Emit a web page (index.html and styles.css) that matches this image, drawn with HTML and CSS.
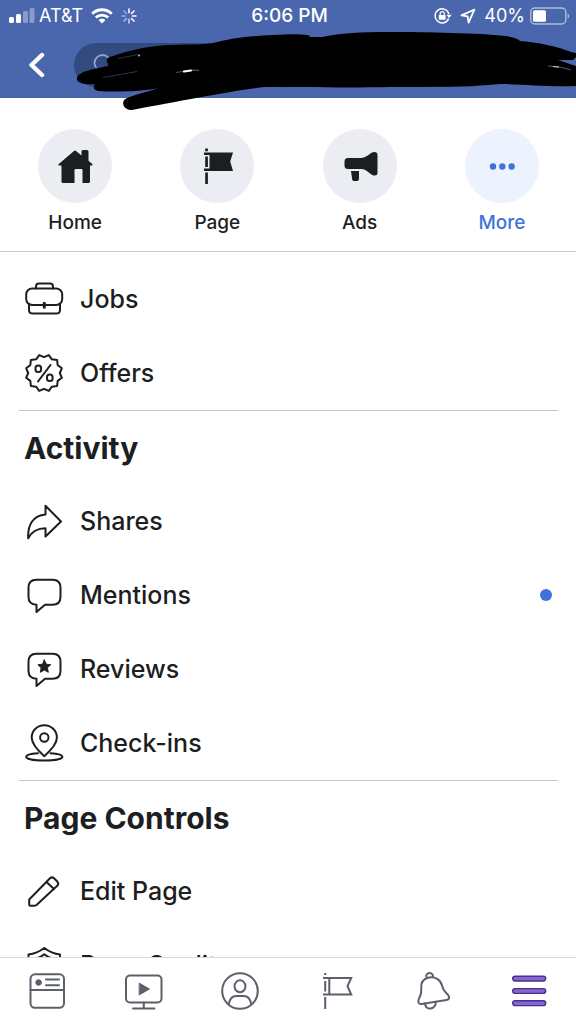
FILE: index.html
```html
<!DOCTYPE html>
<html lang="en">
<head>
<meta charset="utf-8">
<meta name="viewport" content="width=device-width, initial-scale=1">
<title>Page menu</title>
<link rel="stylesheet" href="styles.css">
</head>
<body>
<div class="app">
  <header class="top">
    <div class="status">
      <div class="status-left">
        <svg class="signal" viewBox="0 0 26 16" aria-hidden="true"><rect x="0" y="9" width="5" height="6" rx="1.5"/><rect x="7" y="6" width="5" height="9" rx="1.5"/><rect class="dim" x="14" y="3" width="5" height="12" rx="1.5"/><rect class="dim" x="20.5" y="0" width="5" height="15" rx="1.5"/></svg>
        <span>AT&amp;T</span>
        <svg class="wifi" viewBox="0 0 22 16" aria-hidden="true"><g fill="none" stroke="#fff" stroke-width="2.8"><path d="M1.2 5.8C6.8.4 15.2.4 20.8 5.8"/><path d="M4.8 9.6c3.6-3.4 8.8-3.4 12.4 0"/></g><path d="M11 15.4l-3.4-3.2c1.9-1.8 4.9-1.8 6.8 0z"/></svg>
        <svg class="spinner" viewBox="0 0 16 16" aria-hidden="true"><g fill="none" stroke="#fff" stroke-width="1.6" stroke-linecap="round"><path d="M8 1v3.6"/><path d="M13 3l-2.5 2.5"/><path d="M15 8h-3.6"/><path d="M13 13l-2.5-2.5"/><path d="M8 15v-3.6" opacity=".7"/><path d="M3 13l2.5-2.5" opacity=".55"/><path d="M1 8h3.6" opacity=".45"/><path d="M3 3l2.5 2.5" opacity=".45"/></g></svg>
      </div>
      <time class="clock">6:06 PM</time>
      <div class="status-right">
        <svg class="lock" viewBox="0 0 18 16" aria-hidden="true"><path d="M14.6 10.6A7 7 0 1 1 14.9 6" fill="none" stroke="#fff" stroke-width="1.5"/><path d="M12.6 6.8h5l-2.5 3.4z"/><rect x="4.8" y="7" width="6.8" height="4.8" rx=".6"/><path d="M6.2 7.2V5.6a2 2 0 0 1 4 0v1.6" fill="none" stroke="#fff" stroke-width="1.2"/></svg>
        <svg class="locate" viewBox="0 0 16 16" aria-hidden="true"><path d="M14.4 1.6L1.4 7.4l6.2 1 1 6.2z" fill="none" stroke="#fff" stroke-width="1.8" stroke-linejoin="round"/></svg>
        <span class="percent">40%</span>
        <svg class="battery" viewBox="0 0 40 18" aria-hidden="true"><rect x=".8" y="1" width="35" height="16" rx="4" fill="none" stroke="#fff" stroke-opacity=".55" stroke-width="1.4"/><rect x="3" y="3.2" width="13" height="11.6" rx="1.6"/><path d="M37.6 6.4c2 .6 2 4.6 0 5.2z" opacity=".55"/></svg>
      </div>
    </div>
    <div class="searchbar">
      <button class="back" type="button" aria-label="Back"><svg class="chevron" viewBox="0 0 20 26" aria-hidden="true"><path d="M15 3L4.500 13l10.500 10" fill="none" stroke="#fff" stroke-width="4.400" stroke-linecap="round" stroke-linejoin="round"/></svg></button>
      <div class="field">
        <svg class="glass" viewBox="0 0 24 24" aria-hidden="true"><g fill="none" stroke="#8fa3cd" stroke-width="1.8" stroke-linecap="round"><circle cx="10.500" cy="10" r="8"/><path d="M16.500 16l5 5"/></g></svg>
        <input class="query" type="search" aria-label="Search">
      </div>
    </div>
    <svg class="marker" viewBox="0 0 576 112" aria-hidden="true">
      <path d="M108 64C105 60 107 57 113 56C130 50 152 45 172 45C190 44 204 45 213 43C232 38 250 36 273 35C290 34 300 34 307 35C309 35 310 36 310 37L322 37C340 33 362 32 387 32C430 32 478 33 505 36C513 37 519 39 520 41C536 42 560 47 571 52L576 53V57L573 60L558 60L576 66V86C548 87 520 84 500 84C470 87 430 87 390 87C350 88 300 87 265 87C236 90 160 105 132 110C123 110 120 101 127 98C140 93 150 91 159 88C140 92 112 92 98 91C93 90 93 87 95 84C85 85 76 83 77 78C78 72 92 69 108 66Z"/>
      <path d="M176 72.500l9-1.500 8-.8 6 .2" fill="none" stroke="#46506c" stroke-width="1.200"/>
      <path d="M184 71.600l7-1" fill="none" stroke="#fff" stroke-width="2" stroke-linecap="round"/>
      <path d="M118 58.500c6-1 13-2.600 22-4.500M103 77.500l34-6" fill="none" stroke="#273451" stroke-width="1"/>
      <path d="M138 55.800l2-.4" fill="none" stroke="#b9bfd0" stroke-width="1.200"/>
      <path d="M548 66l12 1 11 3" fill="none" stroke="#55586a" stroke-width="1"/>
      <path d="M553 66.500l6 .6" fill="none" stroke="#e5d5c3" stroke-width="1"/>
    </svg>
  </header>

  <nav class="tabs" aria-label="Sections">
    <a class="tab" href="#home"><span class="disc"><svg class="icon" viewBox="0 0 40 40" aria-hidden="true"><path d="M20 4.500Q20.500 4.500 21 5L26.500 9.500V5.500Q26.500 4 28 4H32Q33.500 4 33.500 5.500V14.800L37.500 18.200Q37.800 19.400 36.500 19.400H35V35.500Q35 37 33.500 37H27.500V24Q27.500 23 26.500 23H20.500Q19.500 23 19.500 24V37H8Q6.500 37 6.500 35.500V19.400H4Q2.800 19.200 3.500 18.200L19 5Q19.500 4.500 20 4.500Z"/></svg></span>Home</a>
    <a class="tab" href="#page"><span class="disc"><svg class="icon" viewBox="0 0 40 40" aria-hidden="true"><path d="M8.200 2.500h2.700v2.700H8.200zM8.200 26.500h2.700V38H8.200zM7 6.600H36L33.200 15.500L36 25H7V22.500H12.500V9H7zM8.200 10.500h2.700v10.500H8.200z"/></svg></span>Page</a>
    <a class="tab" href="#ads"><span class="disc"><svg class="icon" viewBox="0 0 40 40" aria-hidden="true"><path d="M8 12H21C26 12 29 7.500 33 6.200Q37.500 5.500 37.500 9V27Q37.500 30 33.500 29.400C29 28 27 23 21 23H8Q4.500 23 4.500 19.500V15.500Q4.500 12 8 12ZM11 25H19V33Q19 35 17 35H14Q12.500 35 12.200 33.500Z"/></svg></span>Ads</a>
    <a class="tab tab-current" href="#more" aria-current="page"><span class="disc"><svg class="icon" viewBox="0 0 40 40" aria-hidden="true"><circle cx="11" cy="20.500" r="3.200"/><circle cx="20.300" cy="20.500" r="3.200"/><circle cx="29.600" cy="20.500" r="3.200"/></svg></span>More</a>
  </nav>

  <main class="content">
    <section class="group group-first">
      <ul class="list">
        <li><a class="row" href="#jobs"><svg class="icon line" viewBox="0 0 40 40" aria-hidden="true"><rect x="2.200" y="9.500" width="36" height="16.500" rx="6"/><path d="M12 9.500V7.500Q12 4.500 15 4.500H26Q29 4.500 29 7.500V9.500M5 25V31Q5 34.600 9 34.600H32Q36 34.600 36 31V25"/><path d="M20.300 24.200v4" stroke-width="3"/></svg><span>Jobs</span></a></li>
        <li><a class="row" href="#offers"><svg class="icon line" viewBox="0 0 40 40" aria-hidden="true"><path d="M20 4.200L24.800 2.100L27.900 6.300L33.100 6.900L33.700 12.100L37.900 15.200L35.800 20L37.900 24.800L33.700 27.900L33.100 33.100L27.900 33.700L24.800 37.900L20 35.800L15.200 37.900L12.100 33.700L6.900 33.100L6.300 27.900L2.100 24.800L4.200 20L2.100 15.200L6.300 12.100L6.900 6.900L12.100 6.300L15.200 2.100Z"/><path d="M26.500 12L14 28.500"/><rect x="11.500" y="12.500" width="5.600" height="6.600" rx="2.600"/><rect x="23" y="21.500" width="5.600" height="6.600" rx="2.600"/></svg><span>Offers</span></a></li>
      </ul>
    </section>
    <section class="group">
      <h2 class="heading">Activity</h2>
      <ul class="list">
        <li><a class="row" href="#shares"><svg class="icon line" viewBox="0 0 40 40" aria-hidden="true"><path d="M21.500 4.800L37 20.500L21.500 35.500V27.300C13 27.300 8 30 4.200 37.300C3.500 24 9 14.500 21.500 13.500Z"/></svg><span>Shares</span></a></li>
        <li><a class="row" href="#mentions"><svg class="icon line" viewBox="0 0 40 40" aria-hidden="true"><path d="M12.500 4.800H28.500Q36.500 4.800 36.500 12.800V21.800Q36.500 29.800 28.500 29.800H21L12.500 37V29.800Q4.500 29.500 4.500 21.800V12.800Q4.500 4.800 12.500 4.800Z"/></svg><span>Mentions</span><span class="dot" role="img" aria-label="New"></span></a></li>
        <li><a class="row" href="#reviews"><svg class="icon line" viewBox="0 0 40 40" aria-hidden="true"><path d="M12.500 4.800H28.500Q36.500 4.800 36.500 12.800V21.800Q36.500 29.800 28.500 29.800H21L12.500 37V29.800Q4.500 29.500 4.500 21.800V12.800Q4.500 4.800 12.500 4.800Z"/><path class="solid" d="M20.300 11l1.900 4.200 4.500.5-3.300 3.100.9 4.500-4-2.300-4 2.300.9-4.500-3.300-3.100 4.500-.5z"/></svg><span>Reviews</span></a></li>
        <li><a class="row" href="#checkins"><svg class="icon line" viewBox="0 0 40 40" aria-hidden="true"><path d="M20.300 33.200C15 28.500 7.700 21.500 7.700 14.500A12.600 12.300 0 0 1 32.900 14.500C32.900 21.500 25.600 28.500 20.300 33.200Z"/><circle cx="20.300" cy="14.500" r="4.200"/><path d="M14 30.200C7 30.600 2.200 32 2.200 33.800C2.200 36 10 37.600 20.300 37.600S38.400 36 38.400 33.800C38.400 32 33.500 30.600 26.500 30.200"/></svg><span>Check-ins</span></a></li>
      </ul>
    </section>
    <section class="group">
      <h2 class="heading">Page Controls</h2>
      <ul class="list">
        <li><a class="row" href="#edit"><svg class="icon line" viewBox="0 0 40 40" aria-hidden="true"><path d="M5.200 28.500L26 7.200Q28 5.500 30 7.200L33.500 10.800Q35 12.500 33.500 14.500L12.500 34Q11.500 34.800 10 34.800H6.500Q5.200 34.800 5.200 33.500ZM22.500 11L30 18"/></svg><span>Edit Page</span></a></li>
        <li><a class="row" href="#quality"><svg class="icon line" viewBox="0 0 40 40" aria-hidden="true"><path d="M20.300 3Q13 8.500 4.500 9.500V18Q4.500 31 20.300 37.500Q36 31 36 18V9.500Q27.500 8.500 20.300 3Z"/><path d="M12 13.500Q17 12 20.300 9.300Q23.600 12 28.500 13.500V18Q28.500 26 20.300 30.500Q12 26 12 18Z"/></svg><span>Page Quality</span></a></li>
      </ul>
    </section>
  </main>

  <nav class="dock" aria-label="Main">
    <a class="dock-item" href="#feed" aria-label="News feed"><svg class="icon line" viewBox="0 0 40 40" aria-hidden="true"><rect x="2.500" y="3.300" width="33.500" height="33.500" rx="4.500"/><path d="M2.500 19h33.500M18 8.600h13M18 14.200h13"/><circle class="solid" cx="10.600" cy="11.500" r="2.800"/></svg></a>
    <a class="dock-item" href="#watch" aria-label="Watch"><svg class="icon line" viewBox="0 0 40 40" aria-hidden="true"><rect x="2" y="4.500" width="35.500" height="27" rx="4"/><path d="M19.800 31.500V37M9 37.500h21.500"/><path class="solid" d="M15.500 12.300L25.500 18L15.500 23.700Z"/></svg></a>
    <a class="dock-item" href="#profile" aria-label="Profile"><svg class="icon line" viewBox="0 0 40 40" aria-hidden="true"><circle cx="20" cy="20" r="17.800"/><ellipse cx="20" cy="15.300" rx="5.500" ry="6"/><path d="M8.700 33.500C9.500 28 12.500 25 16.500 25H23.500C27.500 25 30.500 28 31.300 33.500"/></svg></a>
    <a class="dock-item" href="#pages" aria-label="Pages"><svg class="icon line flag" viewBox="0 0 40 40" aria-hidden="true"><path d="M9.200 2v2M9.200 10v10.500M9.200 26v12M7 7H35.200L31.500 15.200L35.200 23.500H7M13.300 7V23.500"/></svg></a>
    <a class="dock-item" href="#alerts" aria-label="Notifications"><svg class="icon line" viewBox="0 0 40 40" aria-hidden="true"><path d="M14.600 6.700C13.500 3.800 15.200 2 17.600 2S21.500 4 21 6.300M9.200 18.500C8.500 11 12 7.500 17 6.600C23 5.500 28.500 8.500 30 14.500C30.800 18 31.500 19.500 34 21.800C36.500 24 37.800 25.500 37 27.500Q36.500 28.600 34.500 28.900L9.500 33Q6.500 33.300 6.300 30.500C6.200 26.500 10 25 9.200 18.500Z"/><path d="M12.900 32.500C13.500 36.500 16 38 18.800 37.500S24 34.500 23.800 30.800"/></svg></a>
    <a class="dock-item" href="#menu" aria-label="Menu" aria-current="page"><svg class="icon bars" viewBox="0 0 40 40" aria-hidden="true"><rect x="4.700" y="5.200" width="33" height="4.800" rx="2.400"/><rect x="4.700" y="17.600" width="33" height="4.800" rx="2.400"/><rect x="4.700" y="29.800" width="33" height="4.800" rx="2.400"/></svg></a>
  </nav>
</div>
</body>
</html>
```

FILE: styles.css
```css
*, *::before, *::after { box-sizing: border-box; }

body {
  margin: 0;
  background: #fff;
  color: #1c1e21;
  font-family: Inter, "Liberation Sans", sans-serif;
}

a { color: inherit; text-decoration: none; }

.app {
  display: flex;
  flex-direction: column;
  height: 100vh;
}

.icon {
  display: block;
  flex: none;
  width: 40px;
  height: 40px;
  fill: currentColor;
}

.line {
  fill: none;
  stroke: currentColor;
  stroke-width: 2;
  stroke-linecap: round;
  stroke-linejoin: round;
}

.line .solid { fill: currentColor; stroke-width: 1; }
.flag { stroke-linecap: butt; stroke-linejoin: miter; }

/* Header */
.top {
  position: relative;
  flex: none;
  background: #4a66ad;
  color: #fff;
}

.status {
  display: grid;
  grid-template-columns: 1fr auto 1fr;
  align-items: center;
  height: 32px;
  padding: 0 6px 0 9px;
  font-size: 18px;
  line-height: 24px;
  fill: #fff;
}

.status-left, .status-right { display: flex; align-items: center; }
.status-left { gap: 4px; }
.status-right { justify-content: flex-end; gap: 5px; }
.clock { font-size: 19px; font-weight: 500; }
.signal { width: 26px; height: 16px; }
.dim { opacity: .35; }
.wifi { width: 22px; height: 16px; margin-left: 4px; }
.spinner { width: 16px; height: 16px; margin-left: 4px; }
.lock { width: 18px; height: 16px; }
.locate { width: 16px; height: 16px; margin: 0 3px; }
.battery { width: 40px; height: 18px; }

.searchbar {
  display: flex;
  align-items: center;
  gap: 12px;
  padding: 11px 84px 11px 12px;
}

.back {
  display: flex;
  align-items: center;
  justify-content: center;
  width: 50px;
  height: 44px;
  padding: 0;
  border: 0;
  background: none;
}

.chevron { width: 20px; height: 26px; }

.field {
  display: flex;
  flex: 1;
  align-items: center;
  gap: 8px;
  height: 44px;
  padding: 0 18px;
  border-radius: 22px;
  background: #314b80;
}

.glass { flex: none; width: 24px; height: 24px; }

.query {
  flex: 1;
  min-width: 0;
  border: 0;
  outline: 0;
  background: none;
  color: #fff;
  font: inherit;
}

.marker {
  position: absolute;
  top: 0;
  left: 0;
  width: 100%;
  pointer-events: none;
}

/* Section tabs */
.tabs {
  display: grid;
  grid-template-columns: repeat(4, 1fr);
  flex: none;
  padding: 31px 3px 16px 4px;
  border-bottom: 1px solid #ccced2;
}

.tab {
  display: flex;
  flex-direction: column;
  align-items: center;
  gap: 8px;
  font-size: 19px;
  font-weight: 500;
  line-height: 24px;
}

.disc {
  display: grid;
  place-items: center;
  width: 74px;
  height: 74px;
  border-radius: 50%;
  background: #ebedf2;
}

.tab-current { color: #4271dc; }
.tab-current .disc { background: #edf2ff; }

/* Menu list */
.content {
  flex: 1;
  min-height: 0;
  overflow-y: auto;
  scrollbar-width: none;
}

.group {
  margin: 0 18px 0 19px;
  padding: 0 6px 0 5px;
  border-bottom: 1px solid #c4c6ca;
}

.group-first { padding-top: 10px; }
.group:last-child { border-bottom: 0; }

.heading {
  margin: 0;
  padding: 19px 0 18px;
  font-size: 30px;
  font-weight: 700;
  line-height: 36px;
}

.list { margin: 0; padding: 0; list-style: none; }

.row {
  display: flex;
  align-items: center;
  gap: 16px;
  height: 74px;
  font-size: 25px;
  font-weight: 500;
  line-height: 32px;
}

.dot {
  width: 12px;
  height: 12px;
  margin-left: auto;
  border-radius: 50%;
  background: #4271dc;
}

/* Bottom navigation */
.dock {
  display: grid;
  grid-template-columns: repeat(6, 1fr);
  flex: none;
  height: 67px;
  border-top: 1px solid #d9dadd;
  background: #fff;
  color: #5c606b;
}

.dock-item { display: grid; place-items: center; }

.bars {
  fill: #8568cf;
  stroke: #4b2e8f;
  stroke-width: 1.4;
}
```
